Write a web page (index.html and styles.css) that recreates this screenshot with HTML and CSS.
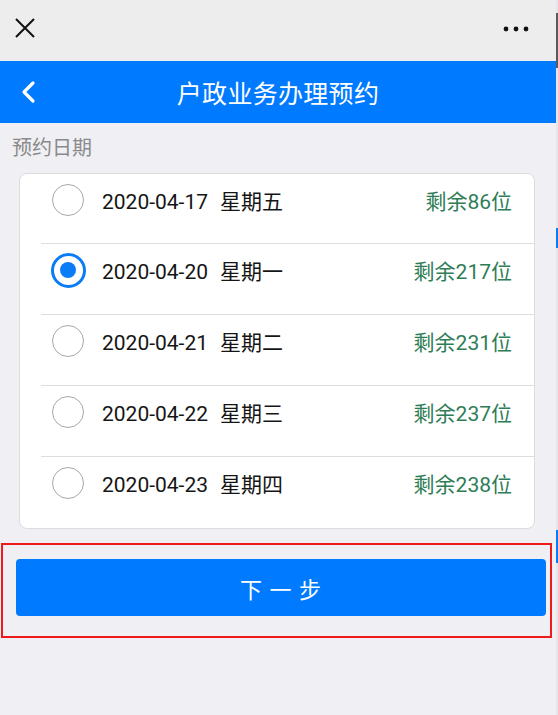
FILE: index.html
```html
<!DOCTYPE html>
<html lang="zh-CN">
<head>
<meta charset="utf-8">
<title>户政业务办理预约</title>
<link rel="stylesheet" href="styles.css">
</head>
<body>
<div class="screen">
  <div class="app">
    <div class="topbar">
      <svg class="close" width="22" height="22" viewBox="0 0 22 22"><path d="M2 2 L20 20 M20 2 L2 20" stroke="#111" stroke-width="2" fill="none"/></svg>
      <svg class="more" width="26" height="6" viewBox="0 0 26 6"><circle cx="3" cy="3" r="2.4" fill="#111"/><circle cx="13" cy="3" r="2.4" fill="#111"/><circle cx="23" cy="3" r="2.4" fill="#111"/></svg>
    </div>
    <div class="header">
      <svg class="back" width="16" height="24" viewBox="0 0 16 24"><path d="M13 3 L4 12 L13 21" stroke="#fff" stroke-width="3.2" fill="none" stroke-linecap="round" stroke-linejoin="round"/></svg>
      <div class="title">户政业务办理预约</div>
    </div>
    <div class="label">预约日期</div>
    <div class="card">
      <div class="row first">
        <span class="slot"><span class="radio"></span></span>
        <span class="date">2020-04-17<span class="week">星期五</span></span>
        <span class="left">剩余86位</span>
      </div>
      <div class="row">
        <span class="slot"><span class="radio checked"></span></span>
        <span class="date">2020-04-20<span class="week">星期一</span></span>
        <span class="left">剩余217位</span>
      </div>
      <div class="row">
        <span class="slot"><span class="radio"></span></span>
        <span class="date">2020-04-21<span class="week">星期二</span></span>
        <span class="left">剩余231位</span>
      </div>
      <div class="row">
        <span class="slot"><span class="radio"></span></span>
        <span class="date">2020-04-22<span class="week">星期三</span></span>
        <span class="left">剩余237位</span>
      </div>
      <div class="row last">
        <span class="slot"><span class="radio"></span></span>
        <span class="date">2020-04-23<span class="week">星期四</span></span>
        <span class="left">剩余238位</span>
      </div>
    </div>
    <div class="highlight">
      <div class="btn">下 一 步</div>
    </div>
  </div>
  <div class="strip">
    <div class="seg s1"></div>
    <div class="seg dark"></div>
    <div class="seg s2"></div>
    <div class="seg blue b1"></div>
    <div class="seg s3"></div>
    <div class="seg blue b2"></div>
  </div>
</div>
</body>
</html>
```
FILE: styles.css
```css
html, body {
  margin: 0;
  padding: 0;
  background: #efeff4;
}
body {
  font-family: Roboto, "Noto Sans CJK SC", sans-serif;
  width: 558px;
  height: 715px;
  overflow: hidden;
}
.screen {
  display: flex;
  height: 715px;
}
.app {
  width: 556px;
  flex: none;
  background: #efeff4;
}
.topbar {
  height: 61px;
  background: #ededed;
  display: flex;
  align-items: center;
  justify-content: space-between;
  padding: 0 27px 0 14px;
}
.close { margin-top: -6px; }
.more { margin-top: -4px; }
.header {
  height: 62px;
  background: #007aff;
  display: flex;
  align-items: center;
  position: relative;
}
.back {
  margin-left: 20px;
  flex: none;
}
.title {
  flex: 1;
  text-align: center;
  color: #fff;
  font-size: 25px;
  margin-left: -36px;
  letter-spacing: 0.3px;
}
.label {
  margin-top: 11px;
  padding-left: 12px;
  font-size: 20px;
  line-height: 28px;
  color: #8a8a8a;
}
.card {
  margin: 11px 21px 0 19px;
  background: #fff;
  border: 1px solid #dcdcdc;
  border-radius: 8px;
  overflow: hidden;
}
.row {
  margin-left: 21px;
  height: 52px;
  padding: 0 22px 18px 9px;
  display: flex;
  align-items: center;
  border-bottom: 1px solid #dedede;
}
.row.first {
  padding-bottom: 17px;
}
.row.last {
  border-bottom: none;
  padding-bottom: 19px;
}
.slot {
  width: 36px;
  height: 36px;
  display: flex;
  align-items: center;
  justify-content: center;
  flex: none;
}
.radio {
  width: 32px;
  height: 32px;
  box-sizing: border-box;
  border: 1px solid #a8a8a8;
  border-radius: 50%;
  display: flex;
  align-items: center;
  justify-content: center;
}
.radio.checked {
  width: 35px;
  height: 35px;
  border: 3px solid #0a7cf5;
}
.radio.checked::after {
  content: "";
  width: 16px;
  height: 16px;
  border-radius: 50%;
  background: #0a7cf5;
}
.date {
  margin-left: 16px;
  font-size: 21px;
  color: #151515;
  flex: 1;
  white-space: nowrap;
}
.week {
  margin-left: 12px;
}
.left {
  font-size: 21px;
  color: #2f7d57;
  white-space: nowrap;
}
.highlight {
  margin: 14px 0 0 1px;
  width: 551px;
  box-sizing: border-box;
  border: 2px solid #f01a1a;
  padding: 14px 4px 20px 13px;
}
.btn {
  height: 57px;
  background: #007aff;
  border-radius: 4px;
  color: #fff;
  font-size: 22px;
  letter-spacing: 1px;
  display: flex;
  align-items: center;
  justify-content: center;
}
.strip {
  width: 2px;
  flex: none;
  background: #e6e6ea;
  border-left: 0;
  display: flex;
  flex-direction: column;
}
.seg { flex: none; }
.s1 { height: 13px; }
.dark { height: 55px; background: #5a5a5a; }
.s2 { height: 160px; }
.blue { background: #0a7cf5; }
.b1 { height: 20px; }
.s3 { height: 282px; }
.b2 { height: 33px; }
```
